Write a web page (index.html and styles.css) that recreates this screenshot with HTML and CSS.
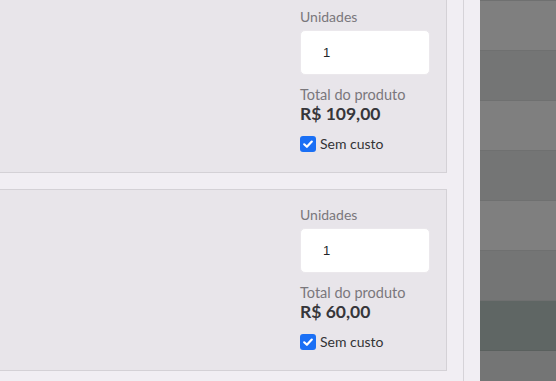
FILE: index.html
```html
<!DOCTYPE html>
<html lang="pt-BR">
<head>
<meta charset="utf-8">
<title>Produtos</title>
<link rel="stylesheet" href="styles.css">
</head>
<body>
<div class="layout">
  <main class="main">
    <div class="cards">
      <section class="card">
        <div class="card-info"></div>
        <div class="card-side">
          <label class="field-label">Unidades</label>
          <div class="qty-input">1</div>
          <div class="total-label">Total do produto</div>
          <div class="total-value">R$ 109,00</div>
          <div class="check-row">
            <span class="checkbox"><svg viewBox="0 0 16 16" width="16" height="16"><path d="M4.2 8.3 L6.9 10.8 L11.8 5.6" fill="none" stroke="#fff" stroke-width="2.2" stroke-linecap="round" stroke-linejoin="round"/></svg></span>
            <span class="check-text">Sem custo</span>
          </div>
        </div>
      </section>
      <section class="card">
        <div class="card-info"></div>
        <div class="card-side">
          <label class="field-label">Unidades</label>
          <div class="qty-input">1</div>
          <div class="total-label">Total do produto</div>
          <div class="total-value">R$ 60,00</div>
          <div class="check-row">
            <span class="checkbox"><svg viewBox="0 0 16 16" width="16" height="16"><path d="M4.2 8.3 L6.9 10.8 L11.8 5.6" fill="none" stroke="#fff" stroke-width="2.2" stroke-linecap="round" stroke-linejoin="round"/></svg></span>
            <span class="check-text">Sem custo</span>
          </div>
        </div>
      </section>
    </div>
  </main>
  <div class="gutter"></div>
  <aside class="backdrop">
    <div class="stripes">
      <div class="stripe light"></div>
      <div class="stripe light"></div>
      <div class="stripe dark"></div>
      <div class="stripe light"></div>
      <div class="stripe dark"></div>
      <div class="stripe light"></div>
      <div class="stripe dark"></div>
      <div class="stripe green"></div>
      <div class="stripe dark"></div>
    </div>
  </aside>
</div>
</body>
</html>
```

FILE: styles.css
```css
html, body {
  margin: 0;
  padding: 0;
  background: #f1eef3;
  overflow: hidden;
  font-family: Lato, "Noto Sans", sans-serif;
}

.layout {
  display: flex;
  height: 381px;
}

.main {
  width: 447px;
  flex: none;
  padding-right: 16px;
  border-right: 1px solid #d6d3d8;
  overflow: hidden;
}

.cards {
  margin-top: -9px;
  margin-left: -30px;
  display: flex;
  flex-direction: column;
  gap: 16px;
}

.card {
  display: grid;
  grid-template-columns: 1fr 130px;
  background: #e8e5ea;
  border: 1px solid #d4d1d6;
  padding: 15px 16px 18px 16px;
}

.card-side {
  display: flex;
  flex-direction: column;
}

.field-label {
  font-size: 14px;
  line-height: 20px;
  color: #7a777c;
}

.qty-input {
  margin-top: 3px;
  height: 43px;
  background: #fff;
  border: 1px solid #ebe8ec;
  border-radius: 5px;
  padding-left: 22px;
  display: flex;
  align-items: center;
  font-family: "Liberation Sans", Arial, sans-serif;
  font-size: 13px;
  color: #212529;
}

.total-label {
  margin-top: 11px;
  font-size: 14.5px;
  line-height: 18px;
  color: #7a777c;
}

.total-value {
  font-size: 17.5px;
  line-height: 20px;
  font-weight: 700;
  color: #36363a;
}

.check-row {
  margin-top: 10px;
  display: flex;
  align-items: center;
  gap: 4px;
  height: 20px;
}

.checkbox {
  width: 16px;
  height: 16px;
  border-radius: 3px;
  background: #1a6ff5;
  display: flex;
}

.check-text {
  font-size: 14px;
  line-height: 20px;
  color: #333336;
}

.gutter {
  width: 16px;
  flex: none;
}

.backdrop {
  flex: 1;
  background: #7a7a7a;
  overflow: hidden;
}

.stripes {
  margin-top: -49px;
}

.stripe {
  height: 49px;
  border-bottom: 1px solid #6f7070;
}

.stripe.light { background: #7f7f7f; }
.stripe.dark { background: #747575; }
.stripe.green { background: #5f6664; border-bottom-color: #5a605e; }
```
